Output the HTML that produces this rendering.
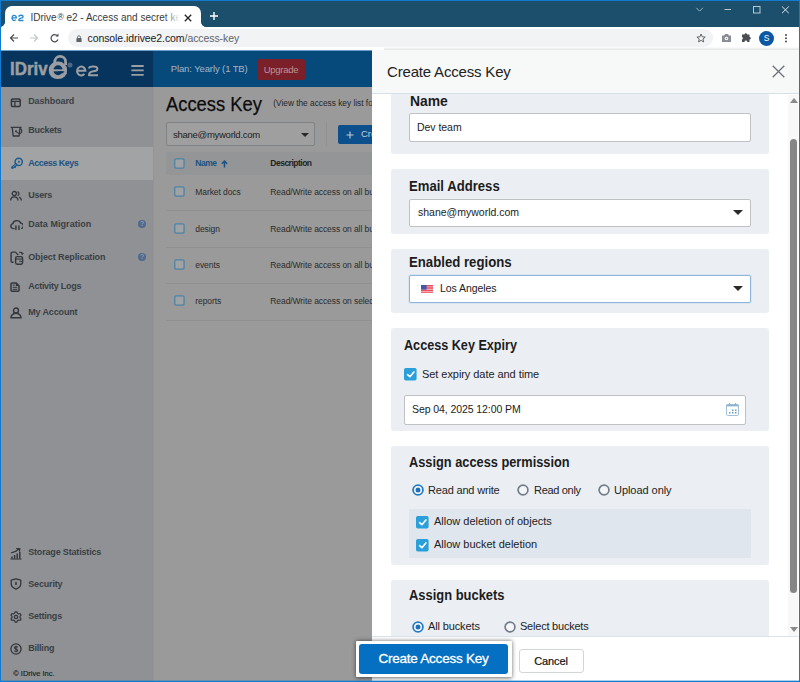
<!DOCTYPE html>
<html>
<head>
<meta charset="utf-8">
<title>IDrive e2</title>
<style>
*{box-sizing:border-box;margin:0;padding:0}
html,body{width:800px;height:682px;overflow:hidden;background:#fff;font-family:"Liberation Sans",sans-serif;color:#1a1a1a}
#win{position:absolute;left:0;top:0;width:800px;height:682px;overflow:hidden;background:#1b4f6b}
.abs{position:absolute}
/* chrome */
#tab{left:5px;top:6px;width:196px;height:22px;background:#fff;border-radius:7px 7px 0 0}
#tabtitle{left:30.5px;top:11.5px;font-size:10px;line-height:12px;letter-spacing:0;color:#3a3a3a;white-space:nowrap;width:148px;overflow:hidden}
#toolbar{left:1px;top:27px;width:798px;height:23px;background:#fff}
#url{left:68px;top:29px;width:645px;height:18.3px;border-radius:9.2px;background:#f1f3f4}
#urltext{left:87.5px;top:32px;font-size:10.5px;line-height:12px;letter-spacing:-0.08px;color:#202124;white-space:nowrap}
/* page */
#page{left:1px;top:50px;width:798px;height:631px;background:#9b9b9b;overflow:hidden}
#hdrL{left:0;top:0;width:152px;height:37px;background:#06345c}
#hdrR{left:152px;top:0;width:646px;height:37px;background:#064a7c}
#side{left:0;top:37px;width:152px;height:594px;background:#8f9194}
.nav{position:absolute;font-size:9px;line-height:12px;font-weight:bold;color:#3a3f45;white-space:nowrap;transform:scaleY(1.07);transform-origin:0 75%}
#main{left:152px;top:37px;width:646px;height:594px;background:#9a9a9a;box-shadow:inset 1px 0 0 #929496}
.row{position:absolute;font-size:8.5px;line-height:11px;letter-spacing:-0.08px;color:#2b2b2b;white-space:nowrap}
.cb{position:absolute;width:10px;height:10px;border:1px solid #5f93b3;border-radius:1.5px;background:#a0a1a2}
/* panel */
#panel{left:371px;top:0;width:427px;height:631px;background:#fff}
#phead{left:0;top:0;width:427px;height:44px;background:#f7f9f9;border-bottom:1px solid #d7e0e8}
.sec{position:absolute;left:19px;width:378px;background:#ebeff4;border-radius:3px}
.lbl{position:absolute;font-weight:bold;font-size:14.5px;line-height:16px;color:#1c1c1c;white-space:nowrap;transform-origin:0 0}
.inp{position:absolute;background:#fff;border:1px solid #bfc1c3;border-radius:2px;font-size:12px;color:#222;white-space:nowrap}
.txt{position:absolute;font-size:11px;color:#222;white-space:nowrap}
.itx{position:absolute;font-size:10.5px;color:#1c1c1c;white-space:nowrap}
.chk{position:absolute;width:12.5px;height:12.5px;background:#2a9ad6;border-radius:2px}
.chk:after{content:"";position:absolute;left:4.3px;top:2px;width:3px;height:6px;border:solid #fff;border-width:0 1.5px 1.5px 0;transform:rotate(42deg)}
.rad{position:absolute;width:12px;height:12px;border:1.8px solid #717c87;border-radius:50%;background:#f4f6f9}
.rad.on{border-color:#2277c4;background:#fff}
.rad.on:after{content:"";position:absolute;left:1.7px;top:1.7px;width:5px;height:5px;border-radius:50%;background:#1f6fb8}
.caret{position:absolute;width:0;height:0;border-left:5px solid transparent;border-right:5px solid transparent;border-top:5.5px solid #2a2a2a}
</style>
</head>
<body>
<div id="win">
  <!-- window border -->
  <div class="abs" style="left:0;top:0;width:800px;height:1px;background:#127acf;z-index:50"></div>
  <div class="abs" style="left:0;top:0;width:1px;height:682px;background:#127acf;z-index:50"></div>
  <div class="abs" style="left:799px;top:0;width:1px;height:682px;background:#127acf;z-index:50"></div>
  <div class="abs" style="left:0;top:681px;width:800px;height:1px;background:#127acf;z-index:50"></div>
  <div class="abs" style="left:0;top:680px;width:800px;height:1px;background:rgba(18,122,207,.35);z-index:50"></div>

  <!-- tab -->
  <div id="tab" class="abs"></div>
  <div class="abs" style="left:0px;top:22px;width:5px;height:5px;background:radial-gradient(circle at 0 0,rgba(255,255,255,0) 4.6px,#fff 5.2px)"></div>
  <div class="abs" style="left:201px;top:22px;width:5px;height:5px;background:radial-gradient(circle at 100% 0,rgba(255,255,255,0) 4.6px,#fff 5.2px)"></div>
  <svg class="abs" style="left:0;top:0" width="30" height="27" viewBox="0 0 30 27"><path d="M12.05 17.85H16.35A2.15 2.6 0 1 0 15.8 19.7" stroke="#2b8ad2" stroke-width="1.35" fill="none"/><path d="M18.9 16.7Q18.9 15.25 21 15.25Q23.05 15.25 23.05 16.7Q23.05 17.9 21 18.1Q18.9 18.3 18.85 20.45H23.5" stroke="#2b8ad2" stroke-width="1.35" fill="none" stroke-linejoin="round"/></svg>
  <div id="tabtitle" class="abs">IDrive<span style="font-size:8.5px;position:relative;top:-1px;margin-left:0.8px">®</span> e2 - Access and secret key</div>
  <div class="abs" style="left:164px;top:9px;width:16px;height:16px;background:linear-gradient(90deg,rgba(255,255,255,0),#fff)"></div>
  <svg class="abs" style="left:183.5px;top:13.7px" width="8" height="8" viewBox="0 0 8 8"><path d="M0.8 0.8L7.2 7.2M7.2 0.8L0.8 7.2" stroke="#222" stroke-width="1.3"/></svg>
  <svg class="abs" style="left:209px;top:11px" width="10" height="10" viewBox="0 0 10 10"><path d="M5 1V9M1 5H9" stroke="#fff" stroke-width="1.4"/></svg>
  <!-- window controls -->
  <svg class="abs" style="left:693px;top:4px" width="100" height="12" viewBox="0 0 100 12">
    <path d="M3.3 3.8L6.6 7.1L9.9 3.8" stroke="#9db3c0" stroke-width="1" fill="none"/>
    <path d="M31.5 5.5H38" stroke="#b5c6d0" stroke-width="1"/>
    <rect x="60.5" y="2.5" width="6.5" height="6.5" stroke="#b9c9d3" fill="none"/>
    <path d="M89 2.5L95.8 9.2M95.8 2.5L89 9.2" stroke="#dde6eb" stroke-width="1"/>
  </svg>

  <!-- toolbar -->
  <div id="toolbar" class="abs"></div>
  <div id="url" class="abs"></div>
  <svg class="abs" style="left:9px;top:32px" width="60" height="12" viewBox="0 0 60 12">
    <path d="M9 6H2M5 2.5L1.5 6L5 9.5" stroke="#4a4d51" stroke-width="1.2" fill="none"/>
    <path d="M21 6H28M25 2.5L28.5 6L25 9.5" stroke="#c4c7ca" stroke-width="1.2" fill="none"/>
    <path d="M48.5 4A3.6 3.6 0 1 0 49 7.5" stroke="#4a4d51" stroke-width="1.2" fill="none"/>
    <path d="M49.5 1.5V4.5H46.5Z" fill="#4a4d51"/>
  </svg>
  <svg class="abs" style="left:76.3px;top:34.8px" width="6" height="7.7" viewBox="0 0 7 9"><rect x="0.5" y="3.5" width="6" height="5" rx="0.8" fill="#5f6368"/><path d="M1.8 4V2.6A1.7 1.7 0 0 1 5.2 2.6V4" stroke="#5f6368" stroke-width="1" fill="none"/></svg>
  <div id="urltext" class="abs">console.idrivee2.com<span style="color:#5f6368">/access-key</span></div>
  <svg class="abs" style="left:696.3px;top:33px" width="10.2" height="10.2" viewBox="0 0 12 12"><path d="M6 1.2L7.4 4.5L10.9 4.8L8.2 7.1L9 10.5L6 8.7L3 10.5L3.8 7.1L1.1 4.8L4.6 4.5Z" stroke="#4a4d51" stroke-width="1" fill="none" stroke-linejoin="round"/></svg>
  <svg class="abs" style="left:721px;top:33px" width="11" height="10" viewBox="0 0 11 10"><path d="M1 2.5H3.2L4 1H7L7.8 2.5H10V9H1Z" fill="#8a8d91"/><circle cx="5.5" cy="5.5" r="1.8" fill="#fff"/><circle cx="5.5" cy="5.5" r="0.8" fill="#8a8d91"/></svg>
  <svg class="abs" style="left:740.3px;top:32.3px" width="12" height="12" viewBox="0 0 12 12"><path d="M4.5 2.5A1.3 1.3 0 0 1 7.1 2.5H9.5V5A1.3 1.3 0 0 1 9.5 7.6V10H7.3A1.4 1.4 0 0 0 4.5 10H2V7.5A1.4 1.4 0 0 0 2 4.9V2.5Z" fill="#4a4d51"/></svg>
  <div class="abs" style="left:759px;top:31px;width:15px;height:15px;border-radius:50%;background:#0b57a4;color:#fff;font-size:8.5px;text-align:center;line-height:15px">S</div>
  <div class="abs" style="left:785px;top:34px;width:2px;height:2px;border-radius:1px;background:#4a4d51;box-shadow:0 3.2px 0 #4a4d51,0 6.4px 0 #4a4d51"></div>

  <div class="abs" style="left:384px;top:46.5px;width:415px;height:3.5px;background:linear-gradient(rgba(226,227,228,0),#e2e3e4);z-index:5"></div>
  <!-- page -->
  <div id="page" class="abs">
    <div id="hdrL" class="abs"></div>
    <div id="hdrR" class="abs"></div>
    <div class="abs" style="left:0;top:0;width:371px;height:1px;background:#6f9cc8;z-index:3"></div>
    <!-- logo -->
    <div class="abs" style="left:9.4px;top:7.6px;font-size:18.8px;line-height:22px;font-weight:bold;color:#9b9ea2;white-space:nowrap;transform-origin:0 0;transform:scaleX(0.9);-webkit-text-stroke:0.5px #9b9ea2">IDriv</div>
    <svg class="abs" style="left:0;top:0" width="152" height="37" viewBox="0 0 152 37">
      <path d="M53.8 13V12A5.4 5.4 0 0 1 64.6 11.6V15" stroke="#9b9ea2" stroke-width="2.8" fill="none"/>
      <rect x="47.8" y="11.6" width="18.2" height="17.5" rx="8.6" ry="8" fill="#9b9ea2"/>
      <ellipse cx="57.1" cy="20.2" rx="4.6" ry="5" fill="#06345c"/>
      <path d="M52 20.3H62" stroke="#9b9ea2" stroke-width="2"/>
      <path d="M57 21.3H63.2V23.2H57Z" fill="#06345c"/>
      <path d="M62.4 23.6L65.5 22.8" stroke="#9b9ea2" stroke-width="2.4"/>
      <circle cx="69" cy="15" r="2.5" fill="#4c6885"/>
      <path d="M76.1 20.8H84.4A4.15 4.4 0 1 0 83.4 23.9" stroke="#9b9ea2" stroke-width="2" fill="none"/>
      <path d="M88 18.6Q88 16.4 92.2 16.4Q96.4 16.4 96.4 18.8Q96.4 21 92.4 21.3Q88.2 21.6 88 25.2H97" stroke="#9b9ea2" stroke-width="2" fill="none" stroke-linejoin="round"/>
      <path d="M130.4 16H142.7M130.4 20.4H142.7M130.4 24.9H142.7" stroke="#9c9fa2" stroke-width="1.9"/>
    </svg>
    <div class="abs" style="left:169.7px;top:11.5px;font-size:9.5px;line-height:14px;letter-spacing:-0.11px;color:#a5b4c4;white-space:nowrap">Plan: Yearly (1 TB)</div>
    <div class="abs" style="left:256px;top:9px;width:48px;height:20.6px;background:#7b1f28;border-radius:2.5px;color:#bb9499;font-size:9.5px;letter-spacing:-0.28px;text-align:center;line-height:21px">Upgrade</div>

    <!-- sidebar -->
    <div id="side" class="abs">
      <div class="abs" style="left:0;top:60px;width:152px;height:33px;background:#a2a3a4"></div>
      <svg class="abs" style="left:9.4px;top:9.7px" width="12" height="12" viewBox="0 0 12 12"><rect x="1.42" y="2.05" width="8.78" height="7.4" rx="1.1" fill="none" stroke="#33373c" stroke-width="1.5"/><path d="M1.4 4.4H10.2M4.9 4.4V9.4" stroke="#33373c" stroke-width="1.3"/></svg>
      <div class="nav" style="left:27.2px;top:8.00px;letter-spacing:-0.11px;color:#3a3f45">Dashboard</div>
      <svg class="abs" style="left:9.4px;top:39.1px" width="14" height="12" viewBox="0 0 14 12"><path d="M0.7 1.35H11.65" stroke="#33373c" stroke-width="1.2"/><path d="M2.2 1.4L3.2 10H9.1L10.1 1.4" fill="none" stroke="#33373c" stroke-width="1.3" stroke-linejoin="round"/><circle cx="6" cy="5.3" r="1" fill="#33373c"/><path d="M6.2 5.6L9.3 7.6" stroke="#33373c" stroke-width="1.1"/><path d="M10 2.7A1.9 2.4 0 0 1 9.8 7.5" fill="none" stroke="#33373c" stroke-width="1.1"/></svg>
      <div class="nav" style="left:27.2px;top:37.25px;letter-spacing:-0.25px;color:#3a3f45">Buckets</div>
      <svg class="abs" style="left:9.6px;top:70.0px" width="12" height="13" viewBox="0 0 12 13"><circle cx="7.7" cy="4.9" r="3.6" fill="none" stroke="#1d5a8e" stroke-width="1.5"/><circle cx="7.9" cy="4.7" r="1.05" fill="#1d5a8e"/><path d="M5.2 7.4L1.5 10.6" stroke="#1d5a8e" stroke-width="2.7" stroke-linecap="round"/><path d="M5.3 7.3L2.2 10" stroke="#a2a3a4" stroke-width="0.7"/><path d="M3.4 10.6L4.8 9.3" stroke="#1d5a8e" stroke-width="1.6"/></svg>
      <div class="nav" style="left:27.2px;top:69.75px;letter-spacing:-0.5px;color:#1d5283">Access Keys</div>
      <svg class="abs" style="left:9.0px;top:102.8px" width="12" height="12" viewBox="0 0 12 12"><circle cx="4.3" cy="3.6" r="2.1" fill="none" stroke="#33373c" stroke-width="1.3"/><path d="M0.7 10.6C0.7 7.8 2.2 6.9 4.3 6.9S7.9 7.8 7.9 10.6" fill="none" stroke="#33373c" stroke-width="1.3"/><path d="M7.6 1.7A2.1 2.1 0 0 1 7.6 5.6M9 7.2C10.5 7.6 11.4 8.6 11.4 10.6" fill="none" stroke="#33373c" stroke-width="1.3"/></svg>
      <div class="nav" style="left:27.2px;top:102.25px;letter-spacing:-0.26px;color:#3a3f45">Users</div>
      <svg class="abs" style="left:8.8px;top:132.1px" width="13.4" height="12" viewBox="0 0 12 12" preserveAspectRatio="none"><path d="M3.6 9.6H3A2.5 2.5 0 0 1 2.6 4.7A3.6 3.6 0 0 1 9.6 4.2A2.8 2.8 0 0 1 10.6 9.4" fill="none" stroke="#33373c" stroke-width="1.3" stroke-linecap="round"/><path d="M5.3 10.6V6.8M8 10.6V6.8" stroke="#33373c" stroke-width="1.3" stroke-linecap="round"/></svg>
      <div class="nav" style="left:27.2px;top:131.00px;letter-spacing:0.05px;color:#3a3f45">Data Migration</div>
      <svg class="abs" style="left:8.6px;top:163.5px" width="14" height="14" viewBox="0 0 14 14"><path d="M5.6 1.1H2.3Q1.1 1.1 1.1 2.3V10.1Q1.1 11.3 2.3 11.3H3.6" fill="none" stroke="#33373c" stroke-width="1.4"/><path d="M5.4 1.1L8.3 4" stroke="#33373c" stroke-width="1.3"/><path d="M9.2 1.4H11Q12.4 1.4 12.4 2.9" fill="none" stroke="#33373c" stroke-width="1.1"/><path d="M10.9 2.3L12.4 3.6L13.6 2.2" fill="none" stroke="#33373c" stroke-width="1"/><rect x="5.6" y="5.6" width="7" height="7.6" rx="1.6" fill="none" stroke="#33373c" stroke-width="1.4"/><path d="M5.8 8H12.4" stroke="#33373c" stroke-width="1.1"/><path d="M9 10.2H11L12.6 11.4" fill="none" stroke="#33373c" stroke-width="1"/></svg>
      <div class="nav" style="left:27.2px;top:163.50px;letter-spacing:-0.1px;color:#3a3f45">Object Replication</div>
      <svg class="abs" style="left:8.95px;top:195.05px" width="12" height="12" viewBox="0 0 12 12"><path d="M1.9 0.9H6L9 3.9V8.3Q9 9.2 8.1 9.2H1.9Q1 9.2 1 8.3V1.8Q1 0.9 1.9 0.9Z" fill="none" stroke="#33373c" stroke-width="1.5" stroke-linejoin="round"/><path d="M5.8 0.9V4.1H9Z" fill="#33373c"/><path d="M2.7 3.1H4.8M2.7 5.3H7.3M2.7 7.3H7.3" stroke="#33373c" stroke-width="1"/></svg>
      <div class="nav" style="left:27.2px;top:193.00px;letter-spacing:-0.27px;color:#3a3f45">Activity Logs</div>
      <svg class="abs" style="left:9.1px;top:220.1px" width="12" height="12" viewBox="0 0 12 12"><circle cx="6" cy="3.5" r="2.5" fill="none" stroke="#33373c" stroke-width="1.4"/><path d="M0.9 10.8A5.1 4.5 0 0 1 11.1 10.8Z" fill="none" stroke="#33373c" stroke-width="1.4" stroke-linejoin="round"/></svg>
      <div class="nav" style="left:27.2px;top:219.25px;letter-spacing:-0.14px;color:#3a3f45">My Account</div>
      <svg class="abs" style="left:9.0px;top:460.7px" width="12" height="12" viewBox="0 0 12 12"><path d="M0.5 11H11.5" stroke="#33373c" stroke-width="1.1"/><path d="M2 10.5V8.5M4.6 10.5V7M7.2 10.5V5.5M9.8 10.5V4" stroke="#33373c" stroke-width="1.5"/><path d="M1 4.9Q5.6 4.3 8.8 1M6.2 0.2L9.7 0.2L9.5 3.6" fill="none" stroke="#33373c" stroke-width="1.35"/></svg>
      <div class="nav" style="left:27.2px;top:459.25px;letter-spacing:-0.17px;color:#3a3f45">Storage Statistics</div>
      <svg class="abs" style="left:9.0px;top:491.4px" width="12" height="12" viewBox="0 0 12 12"><path d="M6 0.8L10.8 2.2V5.6C10.8 8.4 8.8 10.2 6 11.2C3.2 10.2 1.2 8.4 1.2 5.6V2.2Z" fill="none" stroke="#33373c" stroke-width="1.3" stroke-linejoin="round"/><rect x="5.2" y="3.8" width="1.6" height="3.4" rx="0.6" fill="#33373c"/></svg>
      <div class="nav" style="left:27.2px;top:490.50px;letter-spacing:-0.16px;color:#3a3f45">Security</div>
      <svg class="abs" style="left:9.0px;top:523.9px" width="12" height="12" viewBox="0 0 12 12"><circle cx="6" cy="6" r="1.7" fill="none" stroke="#33373c" stroke-width="1.2"/><path d="M5 0.8H7L7.4 2.3L8.6 3L10.1 2.5L11.1 4.2L10 5.3V6.7L11.1 7.8L10.1 9.5L8.6 9L7.4 9.7L7 11.2H5L4.6 9.7L3.4 9L1.9 9.5L0.9 7.8L2 6.7V5.3L0.9 4.2L1.9 2.5L3.4 3L4.6 2.3Z" fill="none" stroke="#33373c" stroke-width="1.2" stroke-linejoin="round"/></svg>
      <div class="nav" style="left:27.2px;top:522.75px;letter-spacing:-0.22px;color:#3a3f45">Settings</div>
      <svg class="abs" style="left:9.0px;top:555.9px" width="12" height="12" viewBox="0 0 12 12"><circle cx="6" cy="6" r="5.1" fill="none" stroke="#33373c" stroke-width="1.3"/><path d="M7.6 4.4Q7.4 3.5 6 3.5Q4.5 3.5 4.5 4.7Q4.5 5.7 6 6Q7.6 6.3 7.6 7.4Q7.6 8.5 6 8.5Q4.5 8.5 4.3 7.5M6 2.7V9.3" fill="none" stroke="#33373c" stroke-width="1.15"/></svg>
      <div class="nav" style="left:27.2px;top:555.25px;letter-spacing:-0.21px;color:#3a3f45">Billing</div>
      <div class="abs" style="left:137px;top:133.00px;width:8.2px;height:8.2px;border-radius:50%;background:#4f6a8f;color:#8d99a8;font-size:7px;font-weight:bold;line-height:8.2px;text-align:center">?</div>
      <div class="abs" style="left:137px;top:165.75px;width:8.2px;height:8.2px;border-radius:50%;background:#4f6a8f;color:#8d99a8;font-size:7px;font-weight:bold;line-height:8.2px;text-align:center">?</div>
      <div class="abs" style="left:12.2px;top:581.5px;font-size:7.5px;line-height:10px;color:#1e2124;-webkit-text-stroke:0.15px #1e2124;white-space:nowrap">© IDrive Inc.</div>
    </div>

    <!-- main -->
    <div id="main" class="abs">
      <div class="abs" style="left:12.8px;top:5px;font-size:20px;line-height:24px;color:#0c0c0c;white-space:nowrap;transform-origin:0 0;transform:scaleX(0.917);-webkit-text-stroke:0.25px #0c0c0c">Access Key</div>
      <div class="abs" style="left:120.3px;top:11px;font-size:8.3px;line-height:10px;color:#262626;white-space:nowrap">(View the access key list for</div>
      <div class="abs" style="left:12.8px;top:35px;width:149px;height:24px;border:1px solid #808385;border-radius:2px;background:#9f9f9f"></div>
      <div class="abs" style="left:20px;top:42px;font-size:9.5px;line-height:12px;letter-spacing:-0.27px;color:#1d1d1d;white-space:nowrap">shane@myworld.com</div>
      <div class="caret" style="left:148px;top:45.5px;border-left-width:4px;border-right-width:4px;border-top-width:4.5px;border-top-color:#2a2a2a"></div>
      <div class="abs" style="left:173px;top:35px;width:1px;height:24px;background:#8e9091"></div>
      <div class="abs" style="left:185.3px;top:38px;width:60px;height:19px;background:#0b4f8d;border-radius:2px"></div>
      <svg class="abs" style="left:193px;top:44px" width="8" height="8" viewBox="0 0 8 8"><path d="M4 0.5V7.5M0.5 4H7.5" stroke="#c3cdd6" stroke-width="1.1"/></svg>
      <div class="abs" style="left:208px;top:41px;font-size:9.5px;line-height:12px;color:#c3cdd6;white-space:nowrap">Create</div>
      <div class="abs" style="left:13px;top:65.3px;width:300px;height:22.4px;background:#949596"></div>
      <svg class="abs" style="left:20.9px;top:71.3px" width="11" height="11" viewBox="0 0 11 11"><rect x="0.75" y="0.75" width="9.3" height="9.3" rx="1.3" fill="#a1a2a3" stroke="#4a83a6" stroke-width="1.25"/></svg>
      <div class="abs" style="left:42.3px;top:70.8px;font-size:8.5px;line-height:11px;font-weight:bold;letter-spacing:-0.45px;color:#1d5283;white-space:nowrap">Name</div>
      <svg class="abs" style="left:68px;top:72.5px" width="7" height="8" viewBox="0 0 7 8"><path d="M3.5 7.5V1.2M0.8 3.8L3.5 1.1L6.2 3.8" stroke="#1d5283" stroke-width="1.5" fill="none"/></svg>
      <div class="abs" style="left:117.3px;top:70.8px;font-size:8.5px;line-height:11px;font-weight:bold;letter-spacing:-0.5px;color:#222;white-space:nowrap">Description</div>
      <svg class="abs" style="left:20.9px;top:99.3px" width="11" height="11" viewBox="0 0 11 11"><rect x="0.75" y="0.75" width="9.3" height="9.3" rx="1.3" fill="#a1a2a3" stroke="#4a83a6" stroke-width="1.25"/></svg>
      <div class="row" style="left:42.3px;top:100.4px">Market docs</div>
      <div class="row" style="left:117.3px;top:100.4px">Read/Write access on all buckets</div>
      <svg class="abs" style="left:20.9px;top:135.7px" width="11" height="11" viewBox="0 0 11 11"><rect x="0.75" y="0.75" width="9.3" height="9.3" rx="1.3" fill="#a1a2a3" stroke="#4a83a6" stroke-width="1.25"/></svg>
      <div class="row" style="left:42.3px;top:136.6px">design</div>
      <div class="row" style="left:117.3px;top:136.6px">Read/Write access on all buckets</div>
      <svg class="abs" style="left:20.9px;top:171.6px" width="11" height="11" viewBox="0 0 11 11"><rect x="0.75" y="0.75" width="9.3" height="9.3" rx="1.3" fill="#a1a2a3" stroke="#4a83a6" stroke-width="1.25"/></svg>
      <div class="row" style="left:42.3px;top:172.9px">events</div>
      <div class="row" style="left:117.3px;top:172.9px">Read/Write access on all buckets</div>
      <svg class="abs" style="left:20.9px;top:207.8px" width="11" height="11" viewBox="0 0 11 11"><rect x="0.75" y="0.75" width="9.3" height="9.3" rx="1.3" fill="#a1a2a3" stroke="#4a83a6" stroke-width="1.25"/></svg>
      <div class="row" style="left:42.3px;top:208.5px">reports</div>
      <div class="row" style="left:117.3px;top:208.5px">Read/Write access on selected</div>
      <div class="abs" style="left:12.8px;top:123.0px;width:300px;height:1px;background:#8f9091"></div>
      <div class="abs" style="left:12.8px;top:159.6px;width:300px;height:1px;background:#8f9091"></div>
      <div class="abs" style="left:12.8px;top:195.6px;width:300px;height:1px;background:#8f9091"></div>
      <div class="abs" style="left:12.8px;top:232.6px;width:300px;height:1px;background:#8f9091"></div>
    </div>

    <!-- panel -->
    <div id="panel" class="abs">
      <div id="phead" class="abs"></div>
      <div class="abs" style="left:15px;top:13px;font-size:15px;letter-spacing:-0.18px;color:#222;white-space:nowrap">Create Access Key</div>
      <svg class="abs" style="left:400px;top:15px" width="13" height="13" viewBox="0 0 13 13"><path d="M0.7 0.7L12.3 12.3M12.3 0.7L0.7 12.3" stroke="#6b7278" stroke-width="1.3"/></svg>

      <!-- body -->
      <div id="pbody" class="abs" style="left:0;top:44px;width:427px;height:542px;overflow:hidden"><div class="abs" style="left:0;top:1px;width:427px;height:541px">
        <!-- sec1 Name -->
        <div class="sec" style="top:-10px;height:69px"></div>
        <div class="lbl" style="left:37.7px;top:-2.0px;transform:scaleX(0.958)">Name</div>
        <div class="inp" style="left:37px;top:18px;width:342px;height:29px"></div>
        <div class="itx" style="letter-spacing:-0.04px;left:45px;top:26px">Dev team</div>
        <!-- sec2 Email -->
        <div class="sec" style="top:74px;height:65px"></div>
        <div class="lbl" style="left:37.3px;top:83.1px;transform:scaleX(0.905)">Email Address</div>
        <div class="inp" style="left:37px;top:104px;width:342px;height:28px"></div>
        <div class="itx" style="letter-spacing:0px;left:46px;top:111px">shane@myworld.com</div>
        <div class="caret" style="left:361px;top:115px"></div>
        <!-- sec3 Regions -->
        <div class="sec" style="top:154px;height:64px"></div>
        <div class="lbl" style="left:37.3px;top:159.1px;transform:scaleX(0.910)">Enabled regions</div>
        <div class="inp" style="left:37px;top:180px;width:342px;height:28px;border-color:#8fb5da;box-shadow:0 0 0 1px #d9e5f1"></div>
        <svg class="abs" style="left:49px;top:189.6px" width="12" height="8.6" viewBox="0 0 12 8.6"><rect width="12" height="8.6" fill="#f8c9ce"/><path d="M0 0.7H12M0 3.1H12M0 5.5H12M0 7.9H12" stroke="#ea4c5c" stroke-width="1.5"/><rect width="5.6" height="4.6" fill="#4356a8"/></svg>
        <div class="itx" style="letter-spacing:-0.07px;left:68px;top:187px">Los Angeles</div>
        <div class="caret" style="left:361px;top:191px"></div>
        <!-- sec4 Expiry -->
        <div class="sec" style="top:233px;height:103px"></div>
        <div class="lbl" style="left:32.0px;top:241.6px;transform:scaleX(0.871)">Access Key Expiry</div>
        <svg class="abs" style="left:32px;top:273.4px" width="12.6" height="12.6" viewBox="0 0 12.6 12.6"><rect width="12.6" height="12.6" rx="1.8" fill="#2a9fd9"/><path d="M3.6 6.6L5.9 8.7L9.9 3.9" stroke="#fff" stroke-width="1.6" fill="none" stroke-linecap="round" stroke-linejoin="round"/></svg>
        <div class="txt" style="letter-spacing:-0.06px;left:50px;top:273px">Set expiry date and time</div>
        <div class="inp" style="left:32px;top:300px;width:342px;height:30px"></div>
        <div class="itx" style="letter-spacing:-0.08px;left:40px;top:308px">Sep 04, 2025 12:00 PM</div>
        <svg class="abs" style="left:354px;top:308px" width="13" height="13" viewBox="0 0 13 13"><rect x="0.5" y="1.5" width="12" height="11" rx="1.2" fill="#fff" stroke="#98b9d6" stroke-width="0.9"/><rect x="0.5" y="1.5" width="12" height="1.9" fill="#8db3d3"/><path d="M3.5 0V3M9.5 0V3" stroke="#8db3d3" stroke-width="1.1"/><path d="M6 7.3H7.5M9 7.3H10.5M3 9.8H4.5M6 9.8H7.5M9 9.8H10.5" stroke="#6a9cc4" stroke-width="1.4"/></svg>
        <!-- sec5 Permission -->
        <div class="sec" style="top:351px;height:119px"></div>
        <div class="lbl" style="left:37.0px;top:359.0px;transform:scaleX(0.882)">Assign access permission</div>
        <svg class="abs" style="left:40px;top:388.5px" width="12" height="12" viewBox="0 0 12 12"><circle cx="6" cy="6" r="4.9" fill="#fff" stroke="#2579c5" stroke-width="1.8"/><circle cx="6" cy="6" r="2.5" fill="#1f70ba"/></svg>
        <div class="txt" style="letter-spacing:-0.18px;left:56px;top:389px">Read and write</div>
        <svg class="abs" style="left:145px;top:388.5px" width="12" height="12" viewBox="0 0 12 12"><circle cx="6" cy="6" r="4.9" fill="#f3f5f8" stroke="#727d88" stroke-width="1.7"/></svg>
        <div class="txt" style="letter-spacing:-0.31px;left:162px;top:389px">Read only</div>
        <svg class="abs" style="left:226px;top:388.5px" width="12" height="12" viewBox="0 0 12 12"><circle cx="6" cy="6" r="4.9" fill="#f3f5f8" stroke="#727d88" stroke-width="1.7"/></svg>
        <div class="txt" style="letter-spacing:-0.05px;left:242px;top:389px">Upload only</div>
        <div class="abs" style="left:37px;top:414px;width:342px;height:49px;background:#dfe6ed"></div>
        <svg class="abs" style="left:44.3px;top:421.2px" width="12.6" height="12.6" viewBox="0 0 12.6 12.6"><rect width="12.6" height="12.6" rx="1.8" fill="#2a9fd9"/><path d="M3.6 6.6L5.9 8.7L9.9 3.9" stroke="#fff" stroke-width="1.6" fill="none" stroke-linecap="round" stroke-linejoin="round"/></svg>
        <div class="txt" style="letter-spacing:-0.01px;left:62px;top:420px">Allow deletion of objects</div>
        <svg class="abs" style="left:44.3px;top:444.2px" width="12.6" height="12.6" viewBox="0 0 12.6 12.6"><rect width="12.6" height="12.6" rx="1.8" fill="#2a9fd9"/><path d="M3.6 6.6L5.9 8.7L9.9 3.9" stroke="#fff" stroke-width="1.6" fill="none" stroke-linecap="round" stroke-linejoin="round"/></svg>
        <div class="txt" style="letter-spacing:-0.01px;left:62px;top:443px">Allow bucket deletion</div>
        <!-- sec6 Buckets -->
        <div class="sec" style="top:485px;height:70px"></div>
        <div class="lbl" style="left:37.0px;top:492.1px;transform:scaleX(0.891)">Assign buckets</div>
        <svg class="abs" style="left:40px;top:525.5px" width="12" height="12" viewBox="0 0 12 12"><circle cx="6" cy="6" r="4.9" fill="#fff" stroke="#2579c5" stroke-width="1.8"/><circle cx="6" cy="6" r="2.5" fill="#1f70ba"/></svg>
        <div class="txt" style="letter-spacing:-0.13px;left:56px;top:525px">All buckets</div>
        <svg class="abs" style="left:132px;top:525.5px" width="12" height="12" viewBox="0 0 12 12"><circle cx="6" cy="6" r="4.9" fill="#f3f5f8" stroke="#727d88" stroke-width="1.7"/></svg>
        <div class="txt" style="letter-spacing:-0.22px;left:148px;top:525px">Select buckets</div>
        <!-- scrollbar -->
        <div class="abs" style="left:416px;top:0;width:10px;height:541px;background:#f8f8f8"></div>
        <div class="abs" style="left:418px;top:43.7px;width:7.4px;height:454.5px;background:#868686;border-radius:4px"></div>
        <div class="abs" style="left:418px;top:3px;width:0;height:0;border-left:4px solid transparent;border-right:4px solid transparent;border-bottom:5px solid #8a8a8a"></div>
        <div class="abs" style="left:418px;top:532px;width:0;height:0;border-left:4px solid transparent;border-right:4px solid transparent;border-top:5px solid #8a8a8a"></div>
      </div>
      </div>
      <!-- footer -->
      <div class="abs" style="left:0;top:585.5px;width:427px;height:46px;background:#fff;border-top:1px solid #dbe4ec"></div>
      <div class="abs" style="left:146.5px;top:599px;width:65px;height:24px;border:1px solid #d3d6d9;border-radius:3px;background:#fff;font-size:11px;letter-spacing:-0.15px;color:#111;-webkit-text-stroke:0.2px #111;text-align:center;line-height:22px">Cancel</div>
    </div>
    <!-- highlighted button (overlaps panel edge) -->
    <div class="abs" style="left:355px;top:591px;width:155.7px;height:35.7px;background:#fff;border-radius:1px;box-shadow:0 0.5px 4px rgba(0,0,0,.6)"></div>
    <div class="abs" style="left:358px;top:594px;width:149px;height:30px;-webkit-text-stroke:0.3px #fff;background:#056fc1;border-radius:3px;color:#fff;font-size:13.5px;letter-spacing:-0.24px;text-align:center;line-height:30px">Create Access Key</div>
  </div>
</div>
</body>
</html>
